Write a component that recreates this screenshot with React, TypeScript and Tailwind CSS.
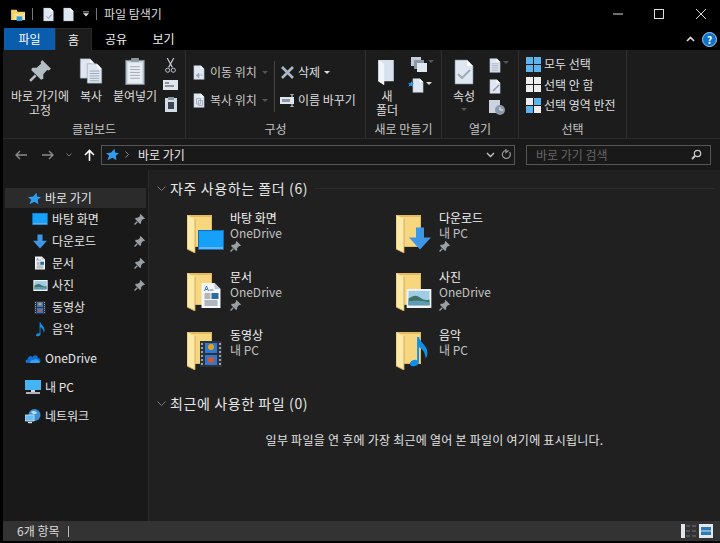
import React from "react";

const FONT = "font-['Noto_Sans_CJK_KR','Noto_Sans',sans-serif]";

function Pin({ size = 11, color = "#9a9fa3" }: { size?: number; color?: string }) {
  return (
    <svg width={size} height={size} viewBox="0 0 20 20" className="block">
      <path d="M12 0 L20 8 L18 9.5 L16.5 9 L13 13 L13 17 L11 18 L2 9 L3 7 L7 7 L11 3.5 L10.5 2 Z" fill={color} />
      <path d="M6 14 L1 19" stroke={color} strokeWidth="2.4" />
    </svg>
  );
}

function Doc({ w = 20, h = 26, fill = "#dfe8f2", lines = false }: { w?: number; h?: number; fill?: string; lines?: boolean }) {
  return (
    <svg width={w} height={h} viewBox="0 0 20 26" className="block">
      <path d="M1 1 H13 L19 7 V25 H1 Z" fill={fill} stroke="#7d8a99" strokeWidth="0.6" />
      <path d="M13 1 V7 H19 Z" fill="#ffffff" />
      {lines && <path d="M4 10 H16 M4 13 H16 M4 16 H16 M4 19 H16 M4 22 H16" stroke="#8f9aa8" strokeWidth="1" />}
    </svg>
  );
}

function Folder({ overlay, pos }: { overlay: React.ReactNode; pos: string }) {
  return (
    <div className="relative w-[38px] h-[38px] shrink-0 mt-[4.5px]">
      <svg width="26" height="38" viewBox="0 0 26 38" className="block">
        <path d="M0 0 H25 V32 H0 Z" fill="#e2bb62" />
        <path d="M2 2 H24 V31 H2 Z" fill="#f6d67e" />
        <path d="M0 0 L8 4 V38 L0 34 Z" fill="#fdeaa9" />
        <path d="M8 4 V38" stroke="#c9a24e" strokeWidth="0.8" />
        <path d="M0 0 V34 L8 38" stroke="#d4ad57" strokeWidth="0.8" fill="none" />
      </svg>
      <div className={`absolute ${pos}`}>{overlay}</div>
    </div>
  );
}

function Desktop({ w = 26, h = 20 }: { w?: number; h?: number }) {
  return (
    <svg width={w} height={h} viewBox="0 0 26 20" className="block">
      <rect width="26" height="20" fill="#0f6fc4" />
      <path d="M1 1 H25 V17 H1 Z" fill="#15a0fa" />
      <path d="M1 18 H25" stroke="#b5e2ff" strokeWidth="1.2" />
    </svg>
  );
}
function DownArrow({ w = 22, h = 23 }: { w?: number; h?: number }) {
  return (
    <svg width={w} height={h} viewBox="0 0 22 22" className="block">
      <path d="M7 0 H15 V10 H22 L11 22 L0 10 H7 Z" fill="#3d97e6" />
    </svg>
  );
}
function DocPage({ w = 20, h = 25 }: { w?: number; h?: number }) {
  return (
    <svg width={w} height={h} viewBox="0 0 19 25" className="block">
      <path d="M0 0 H13 L19 6 V25 H0 Z" fill="#f4f6f8" />
      <path d="M13 0 V6 H19 Z" fill="#bcc6d0" />
      <path d="M3 8 L5 3 L7 8 M3.8 6.5 H6.2" stroke="#3c7fd0" strokeWidth="1" fill="none" />
      <path d="M3 11 H9 M3 13 H9 M3 15 H9 M3 18 H16 M3 20 H16 M3 22 H16 M8 7 H12" stroke="#6d7680" strokeWidth="1" />
      <rect x="10" y="10" width="7" height="6" fill="#2d6a9c" />
    </svg>
  );
}
function Picture({ w = 26, h = 19 }: { w?: number; h?: number }) {
  return (
    <svg width={w} height={h} viewBox="0 0 26 20" className="block">
      <rect width="26" height="20" fill="#f1f3f4" />
      <rect x="2" y="2" width="22" height="15" fill="#9fcbe6" />
      <path d="M2 10 Q9 5 14 9 T24 11 V17 H2 Z" fill="#3c7463" />
      <path d="M2 13 Q12 11 24 14 V17 H2 Z" fill="#5e9bb8" />
    </svg>
  );
}
function Film({ w = 22, h = 26 }: { w?: number; h?: number }) {
  return (
    <svg width={w} height={h} viewBox="0 0 22 26" className="block">
      <rect width="22" height="26" fill="#2d3138" />
      <path d="M2 2 V24 M20 2 V24" stroke="#9aa2ac" strokeWidth="2" strokeDasharray="2 2" />
      <rect x="5" y="2" width="12" height="10" fill="#2f78d6" />
      <rect x="5" y="14" width="12" height="10" fill="#2f78d6" />
      <circle cx="11" cy="6" r="3" fill="#e0a526" />
      <circle cx="11" cy="19" r="3" fill="#d6552c" />
    </svg>
  );
}
function Note({ w = 20, h = 30 }: { w?: number; h?: number }) {
  return (
    <svg width={w} height={h} viewBox="0 0 20 32" className="block">
      <path d="M8 0 H10 C11 6 19 9 19 17 C19 20 18 22 17 23 C17 17 14 13 10 11 V26 C10 30 5 32 2 31 C-1 30 0 26 3 25 C5 24 7 24 8 25 Z" fill="#0f8fe8" />
    </svg>
  );
}
function Star({ size = 13 }: { size?: number }) {
  return (
    <svg width={size} height={size} viewBox="0 0 20 20" className="block">
      <path d="M13 1 L14 7 L20 8 L15 12 L16 19 L10 15 L2 19 L5 12 L0 8 L8 7 Z" fill="#2f9df0" />
    </svg>
  );
}
function Cloud() {
  return (
    <svg width="16" height="11" viewBox="0 0 16 11" className="block">
      <path d="M2 10 C0 10 0 6.5 2.5 6.5 C3 3 6 2 7.5 4 C9 1 13 2 13 5 C16 5 16.5 10 13.5 10 Z" fill="#0f6fd0" />
      <path d="M5 10 C5 7.5 7 6.5 8.5 7 C10 5 13 6 13 7.5 C15 7.5 15.5 10 13.5 10 Z" fill="#35a0f0" />
    </svg>
  );
}
function Monitor() {
  return (
    <svg width="16" height="14" viewBox="0 0 16 14" className="block">
      <rect width="16" height="10" fill="#45b4f5" />
      <path d="M6 10 H10 V12 H6 Z" fill="#cfd8e0" />
      <path d="M1 13 H15" stroke="#e4e8ec" strokeWidth="1.5" />
    </svg>
  );
}
function Globe() {
  return (
    <svg width="16" height="15" viewBox="0 0 16 15" className="block">
      <circle cx="9.5" cy="6" r="6" fill="#3b8fd8" />
      <path d="M6 3 C8 1 11 2 12 4 C10 6 7 5 6 3 Z" fill="#bfe2fa" />
      <rect x="0" y="6" width="9" height="6" fill="#66c0f5" stroke="#d8e2ea" strokeWidth="0.8" />
      <path d="M3 13.5 H7" stroke="#d8e2ea" strokeWidth="1.4" />
    </svg>
  );
}

function Tile({ name, sub, pin, overlay, pos }: { name: string; sub: string; pin?: boolean; overlay: React.ReactNode; pos: string }) {
  return (
    <div className="flex h-[58.5px] gap-[5px]">
      <Folder overlay={overlay} pos={pos} />
      <div className="flex flex-col text-[12px] leading-[15px]">
        <span className="text-[#f2f2f2]">{name}</span>
        <span className="text-[#c2c2c2]">{sub}</span>
        {pin && <span className="mt-[1px]"><Pin /></span>}
      </div>
    </div>
  );
}

function SubRow({ icon, label, pin }: { icon: React.ReactNode; label: string; pin?: boolean }) {
  return (
    <div className="flex items-center h-[22px] pl-[29px] pr-[3px]">
      <span className="w-[16px] flex justify-center shrink-0 mr-[4px]">{icon}</span>
      <span className="flex-1">{label}</span>
      {pin && <Pin />}
    </div>
  );
}

function TopRow({ icon, label }: { icon: React.ReactNode; label: string }) {
  return (
    <div className="flex items-center h-[22px] pl-[22px] mt-[7px]">
      <span className="w-[16px] flex justify-center shrink-0 mr-[4px]">{icon}</span>
      <span>{label}</span>
    </div>
  );
}

function Group({ label, width, children }: { label: string; width: string; children: React.ReactNode }) {
  return (
    <div className={`flex flex-col border-r border-[#2f2f2f] shrink-0 ${width}`}>
      <div className="flex-1 min-h-0">{children}</div>
      <div className="h-[19px] pt-[2px] text-center leading-[15px] text-[#c4c4c4]">{label}</div>
    </div>
  );
}

function Chev() {
  return <svg width="6" height="3" viewBox="0 0 6 3" className="block"><path d="M0 0 H6 L3 3 Z" fill="#555" /></svg>;
}
function WhiteChev() {
  return <svg width="6" height="3" viewBox="0 0 6 3" className="block"><path d="M0 0 H6 L3 3 Z" fill="#ddd" /></svg>;
}

function Grid4({ colors }: { colors: string[] }) {
  return (
    <span className="grid grid-cols-2 gap-[1px] w-[15px] h-[15px] shrink-0">
      {colors.map((c, i) => <span key={i} style={{ background: c }} />)}
    </span>
  );
}

function Section({ title, line }: { title: string; line?: boolean }) {
  return (
    <div className="flex items-center h-[18px] text-[14px] tracking-[0.6px] text-[#e6e6e6] pl-[8px]">
      <svg width="9" height="5" viewBox="0 0 9 5" className="mr-[4px]"><path d="M0.5 0.5 L4.5 4.5 L8.5 0.5" stroke="#777" fill="none" /></svg>
      <span>{title}</span>
      {line && <span className="flex-1 h-px bg-[#2c2c2c] ml-[7px] mr-[5px]" />}
    </div>
  );
}

export default function App() {
  return (
    <div className={`${FONT} w-[720px] h-[543px] bg-black flex flex-col overflow-hidden select-none text-[12px]`}>
      {/* title bar */}
      <div className="h-[28px] flex items-center shrink-0 text-[#dcdcdc]">
        <svg width="15" height="13" viewBox="0 0 16 14" className="ml-[11px]">
          <path d="M0 2 H6 L7 4 H15 V13 H0 Z" fill="#f4cf63" />
          <path d="M3 6 H15 V13 H3 Z" fill="#f9e08e" />
          <rect x="6" y="9" width="6" height="5" fill="#2f9de0" />
        </svg>
        <span className="ml-[6px] w-px h-[12px] bg-[#777]" />
        <span className="ml-[10px] relative">
          <Doc w={11} h={15} />
          <svg width="6" height="5" viewBox="0 0 6 5" className="absolute left-[3px] top-[7px]"><path d="M0.5 2.5 L2.5 4.5 L5.5 0.5" stroke="#8a96a4" fill="none" /></svg>
        </span>
        <span className="ml-[9px]"><Doc w={11} h={15} /></span>
        <svg width="6" height="6" viewBox="0 0 7 6" className="ml-[9px]"><path d="M0 0 H7 V1 H0 Z M0 2 H7 L3.5 6 Z" fill="#ddd" /></svg>
        <span className="ml-[7px] w-px h-[12px] bg-[#777]" />
        <span className="ml-[7px] leading-none">파일 탐색기</span>
        <div className="flex-1" />
        <svg width="10" height="10" viewBox="0 0 10 10" className="mr-[31px]"><path d="M0 5 H10" stroke="#ddd" strokeWidth="1" /></svg>
        <svg width="10" height="10" viewBox="0 0 10 10" className="mr-[32px]"><rect x="0.5" y="0.5" width="9" height="9" fill="none" stroke="#ddd" strokeWidth="1" /></svg>
        <svg width="10" height="10" viewBox="0 0 10 10" className="mr-[14px]"><path d="M0 0 L10 10 M10 0 L0 10" stroke="#ddd" strokeWidth="1" /></svg>
      </div>
      {/* tab row */}
      <div className="h-[22px] flex shrink-0 pl-[4px] items-stretch">
        <div className="w-[51px] bg-[#0a5cad] text-white flex items-center justify-center">파일</div>
        <div className="w-[37px] bg-[#1c1c1c] text-[#f0f0f0] flex items-center justify-center border-t border-x border-[#2a2a2a]">홈</div>
        <div className="w-[48px] text-[#f0f0f0] flex items-center justify-center">공유</div>
        <div className="w-[47px] text-[#f0f0f0] flex items-center justify-center">보기</div>
        <div className="flex-1" />
        <svg width="9" height="6" viewBox="0 0 9 6" className="self-center mr-[7px]"><path d="M1 5 L4.5 1.5 L8 5" stroke="#ddd" strokeWidth="1.6" fill="none" /></svg>
        <div className="w-[15px] h-[15px] rounded-full bg-[#1272c8] border border-[#9fd0f5] text-white text-[10px] font-bold flex items-center justify-center self-center mr-[3px]">?</div>
      </div>
      {/* ribbon */}
      <div className="h-[89px] ml-[3px] bg-[#1c1c1c] border-b border-[#2b2b2b] flex shrink-0 leading-[14px] text-[#dedede]">
        <Group label="클립보드" width="w-[183px]">
          <div className="flex pt-[8px] pl-[3px] h-full">
            <div className="w-[68px] flex flex-col items-center">
              <div className="h-[28px] pt-[2px]"><Pin size={22} color="#b4bdc6" /></div>
              <div className="text-center mt-[3px] whitespace-nowrap">바로 가기에<br />고정</div>
            </div>
            <div className="w-[34px] flex flex-col items-center">
              <div className="h-[28px] w-[24px] relative">
                <Doc w={17} h={21} />
                <span className="absolute left-[7px] top-[5px]"><Doc w={17} h={21} lines /></span>
              </div>
              <div className="mt-[3px]">복사</div>
            </div>
            <div className="w-[54px] flex flex-col items-center">
              <div className="h-[28px]">
                <svg width="20" height="27" viewBox="0 0 20 28" className="block"><rect x="0.5" y="2.5" width="19" height="25" fill="#c8d4e0" stroke="#7d8a99" /><rect x="2.5" y="5" width="15" height="21" fill="#e8edf2" /><path d="M5 9 H15 M5 12 H15 M5 15 H15 M5 18 H15 M5 21 H15" stroke="#a0aab4" /><rect x="6" y="0" width="8" height="4" fill="#8c98a4" /></svg>
              </div>
              <div className="mt-[3px] whitespace-nowrap">붙여넣기</div>
            </div>
            <div className="w-[17px] flex flex-col items-center gap-[7px]">
              <svg width="11" height="15" viewBox="0 0 11 16" className="block"><path d="M2 0 L7.5 10 M9 0 L3.5 10" stroke="#c6ced6" strokeWidth="1.2" /><circle cx="2.5" cy="13" r="2.2" fill="none" stroke="#c6ced6" /><circle cx="8.5" cy="13" r="2.2" fill="none" stroke="#c6ced6" /></svg>
              <svg width="15" height="10" viewBox="0 0 15 10" className="block"><rect width="15" height="10" fill="#dfe6ec" /><path d="M2 3 H6 M2 6 H11" stroke="#445" strokeWidth="1" /></svg>
              <svg width="12" height="15" viewBox="0 0 12 15" className="block"><rect y="1" width="12" height="14" fill="#d3dce5" /><rect x="3" y="0" width="6" height="3" fill="#8c98a4" /><rect x="3" y="5" width="6" height="7" fill="#3d4550" /></svg>
            </div>
          </div>
        </Group>
        <Group label="구성" width="w-[180px]">
          <div className="flex h-full pl-[7px] pt-[15px]">
            <div className="flex flex-col gap-[14px] w-[81px] text-[#c8c8c8]">
              <div className="flex items-center h-[14px] whitespace-nowrap">
                <span className="relative"><Doc w={12} h={15} /><svg width="7" height="5" viewBox="0 0 7 5" className="absolute left-[3px] top-[8px]"><path d="M3 0 L0 2.5 L3 5 Z M3 2 H7" fill="#9aa6b2" stroke="#9aa6b2" strokeWidth="0.6" /></svg></span>
                <span className="ml-[5px] mr-[5px]">이동 위치</span><Chev />
              </div>
              <div className="flex items-center h-[14px] whitespace-nowrap">
                <span className="relative"><Doc w={12} h={15} /><svg width="7" height="8" viewBox="0 0 7 8" className="absolute left-[3px] top-[5px]"><path d="M0.5 0.5 H4.5 V6 H0.5 Z M2.5 2.5 H6.5 V7.5 H2.5 Z" fill="none" stroke="#9aa6b2" strokeWidth="0.8" /></svg></span>
                <span className="ml-[5px] mr-[5px]">복사 위치</span><Chev />
              </div>
            </div>
            <div className="w-px h-[51px] bg-[#444] -mt-[4px]" />
            <div className="flex flex-col gap-[14px] ml-[5px]">
              <div className="flex items-center h-[14px]">
                <svg width="13" height="13" viewBox="0 0 13 13" className="ml-[1px] mr-[4px]"><path d="M1 1 L12 12 M12 1 L1 12" stroke="#a9b7c6" strokeWidth="2.6" /></svg>
                <span className="mr-[4px]">삭제</span>
                <WhiteChev />
              </div>
              <div className="flex items-center gap-[2px] h-[14px] whitespace-nowrap">
                <svg width="16" height="13" viewBox="0 0 16 13"><rect x="0" y="3" width="14" height="7" fill="#dfe6ec" /><rect x="2" y="5" width="8" height="3" fill="#8a96a4" /><path d="M10 0 H14 M12 0 V13 M10 13 H14" stroke="#dfe6ec" /></svg>
                <span>이름 바꾸기</span>
              </div>
            </div>
          </div>
        </Group>
        <Group label="새로 만들기" width="w-[76px]">
          <div className="flex h-full pl-[5px] pt-[8px]">
            <div className="w-[32px] flex flex-col items-center text-center">
              <div className="h-[28px] pt-[2px]"><svg width="19" height="25" viewBox="0 0 19 26" className="block"><path d="M0 0 H16 V22 H6 V26 L0 22 Z" fill="#d8e2ee" /><path d="M0 0 L6 4 V26 L0 22 Z" fill="#f1f5fa" /></svg></div>
              <div className="mt-[3px]">새<br />폴더</div>
            </div>
            <div className="flex flex-col gap-[6px] ml-[8px] -mt-[1px]">
              <div className="flex items-start gap-[1px]"><svg width="16" height="15" viewBox="0 0 16 15" className="block"><rect x="0" y="0" width="10" height="9" fill="#c4ced9" /><rect x="3" y="3" width="10" height="9" fill="#8c98a6" /><rect x="6" y="6" width="10" height="9" fill="#dfe7ef" /></svg><span className="mt-[3px]"><Chev /></span></div>
              <div className="flex items-start gap-[1px] relative">
                <Doc w={14} h={15} />
                <span className="absolute -left-[3px] top-[3px]"><Star size={6} /></span>
                <span className="mt-[4px]"><WhiteChev /></span>
              </div>
            </div>
          </div>
        </Group>
        <Group label="열기" width="w-[77px]">
          <div className="flex h-full pl-[2px] pt-[9px]">
            <div className="w-[40px] flex flex-col items-center">
              <div className="h-[27px] relative"><Doc w={20} h={26} /><svg width="14" height="10" viewBox="0 0 14 10" className="absolute left-[3px] top-[10px]"><path d="M1 5 L5 9 L13 1" stroke="#9eabb9" strokeWidth="2" fill="none" /></svg></div>
              <div className="mt-[3px]">속성</div>
              <span className="mt-[5px]"><Chev /></span>
            </div>
            <div className="flex flex-col gap-[6px] ml-[5px] -mt-[1px]">
              <div className="flex items-start gap-[2px]"><Doc w={12} h={15} lines /><span className="mt-[3px]"><Chev /></span></div>
              <span className="relative block">
                <Doc w={12} h={15} />
                <svg width="8" height="8" viewBox="0 0 8 8" className="absolute left-[3px] top-[5px]"><path d="M7 1 L1 7" stroke="#8a96a4" strokeWidth="1.4" /></svg>
              </span>
              <svg width="16" height="15" viewBox="0 0 16 15" className="block"><rect x="0" y="0" width="11" height="13" fill="#c9d4df" /><circle cx="11" cy="10" r="5" fill="#8a9aab" /><path d="M11 7 V10 H14" stroke="#eef2f6" fill="none" /></svg>
            </div>
          </div>
        </Group>
        <Group label="선택" width="w-[108px]">
          <div className="flex flex-col pl-[7px] pt-[6px] gap-[4.5px] whitespace-nowrap">
            <div className="flex items-center gap-[3px] h-[16px]"><Grid4 colors={["#5bb4f0", "#5bb4f0", "#5bb4f0", "#5bb4f0"]} /><span>모두 선택</span></div>
            <div className="flex items-center gap-[3px] h-[16px]"><Grid4 colors={["#eee", "#eee", "#eee", "#eee"]} /><span>선택 안 함</span></div>
            <div className="flex items-center gap-[3px] h-[16px]"><Grid4 colors={["#eee", "#5bb4f0", "#5bb4f0", "#eee"]} /><span>선택 영역 반전</span></div>
          </div>
        </Group>
      </div>
      {/* address bar */}
      <div className="h-[31px] ml-[3px] bg-[#191919] flex items-center shrink-0">
        <svg width="12" height="10" viewBox="0 0 12 10" className="ml-[12px]"><path d="M5 1 L1 5 L5 9 M1 5 H12" stroke="#8a8a8a" strokeWidth="1.4" fill="none" /></svg>
        <svg width="12" height="10" viewBox="0 0 12 10" className="ml-[15px]"><path d="M7 1 L11 5 L7 9 M11 5 H0" stroke="#8a8a8a" strokeWidth="1.4" fill="none" /></svg>
        <svg width="6" height="4" viewBox="0 0 6 4" className="ml-[12px]"><path d="M0.5 0.5 L3 3 L5.5 0.5" stroke="#777" fill="none" /></svg>
        <svg width="11" height="12" viewBox="0 0 11 12" className="ml-[12px]"><path d="M5.5 12 V2 M1 6 L5.5 1.5 L10 6" stroke="#fff" strokeWidth="1.6" fill="none" /></svg>
        <div className="ml-[6px] w-[414px] h-[20px] border border-[#555] flex items-center pl-[4px] pr-[3px] text-[#e8e8e8]">
          <Star size={13} />
          <svg width="4" height="7" viewBox="0 0 4 7" className="ml-[6px]"><path d="M0.5 0.5 L3.5 3.5 L0.5 6.5" stroke="#888" fill="none" /></svg>
          <span className="ml-[9px]">바로 가기</span>
          <div className="flex-1" />
          <svg width="9" height="6" viewBox="0 0 9 6"><path d="M1 1 L4.5 4.5 L8 1" stroke="#c4c4c4" strokeWidth="1.4" fill="none" /></svg>
          <svg width="10" height="11" viewBox="0 0 10 11" className="ml-[6px]"><path d="M8.5 3 A4 4 0 1 1 5 1.5 M5 0 V3.5 L7.5 1.5" stroke="#9a9a9a" strokeWidth="1.2" fill="none" /></svg>
        </div>
        <div className="ml-[11px] w-[185px] h-[20px] border border-[#555] flex items-center pl-[9px] pr-[8px] text-[#666]">
          <span className="flex-1">바로 가기 검색</span>
          <svg width="11" height="11" viewBox="0 0 11 11"><circle cx="6.5" cy="4.5" r="3.2" fill="none" stroke="#ccc" strokeWidth="1.2" /><path d="M4 7 L1 10" stroke="#ccc" strokeWidth="1.8" /></svg>
        </div>
      </div>
      {/* main */}
      <div className="h-[351px] ml-[3px] flex shrink-0">
        <div className="w-[146px] bg-[#191919] border-r border-[#2b2b2b] pt-[18px] shrink-0 flex flex-col text-[#e6e6e6]">
          <div className="flex items-center h-[20px] bg-[#2b2b2b] ml-[2px] mr-[2px] pl-[23px]">
            <span className="mr-[4px]"><Star size={13} /></span>
            <span className="-mt-[1px]">바로 가기</span>
          </div>
          <SubRow icon={<Desktop w={16} h={12} />} label="바탕 화면" pin />
          <SubRow icon={<DownArrow w={14} h={15} />} label="다운로드" pin />
          <SubRow icon={<DocPage w={10} h={14} />} label="문서" pin />
          <SubRow icon={<Picture w={15} h={11} />} label="사진" pin />
          <SubRow icon={<Film w={12} h={13} />} label="동영상" />
          <SubRow icon={<Note w={9} h={15} />} label="음악" />
          <TopRow icon={<Cloud />} label="OneDrive" />
          <TopRow icon={<Monitor />} label="내 PC" />
          <TopRow icon={<Globe />} label="네트워크" />
        </div>
        <div className="flex-1 bg-[#202020] pt-[9px] flex flex-col">
          <Section title="자주 사용하는 폴더 (6)" line />
          <div className="grid grid-cols-[209px_209px] mt-[13px] pl-[38px]">
            <Tile name="바탕 화면" sub="OneDrive" pin overlay={<Desktop />} pos="right-[1px] bottom-[3px]" />
            <Tile name="다운로드" sub="내 PC" pin overlay={<DownArrow />} pos="right-[3px] bottom-[3px]" />
            <Tile name="문서" sub="OneDrive" pin overlay={<DocPage />} pos="right-[4px] bottom-[3px]" />
            <Tile name="사진" sub="OneDrive" pin overlay={<Picture />} pos="right-[2px] bottom-[3px]" />
            <Tile name="동영상" sub="내 PC" overlay={<Film />} pos="right-[3px] bottom-[3px]" />
            <Tile name="음악" sub="내 PC" overlay={<Note />} pos="right-[5px] bottom-[3px]" />
          </div>
          <div className="mt-[8.5px]"><Section title="최근에 사용한 파일 (0)" /></div>
          <div className="mt-[20px] text-center leading-[16px] tracking-[0.25px] text-[#e0e0e0]">일부 파일을 연 후에 가장 최근에 열어 본 파일이 여기에 표시됩니다.</div>
        </div>
      </div>
      {/* status bar */}
      <div className="h-[20px] ml-[3px] bg-[#333333] flex items-center shrink-0 text-[#dcdcdc]">
        <span className="ml-[14px]">6개 항목</span>
        <span className="ml-[9px] w-px h-[11px] bg-[#bbb]" />
        <div className="flex-1" />
        <svg width="15" height="14" viewBox="0 0 15 14" className="mr-[3px]">
          <rect width="4" height="14" fill="#dfe6ec" />
          <path d="M5 2 H9 M11 2 H15 M5 7 H9 M11 7 H15 M5 12 H9 M11 12 H15" stroke="#777" strokeWidth="1.2" />
        </svg>
        <svg width="14" height="14" viewBox="0 0 14 14" className="mr-[7px]">
          <rect width="14" height="14" fill="#e4e8ec" />
          <rect x="2" y="3" width="10" height="8" fill="#2d7ab8" />
          <path d="M2 7 H12" stroke="#cfe6f5" strokeWidth="1" />
        </svg>
      </div>
    </div>
  );
}
